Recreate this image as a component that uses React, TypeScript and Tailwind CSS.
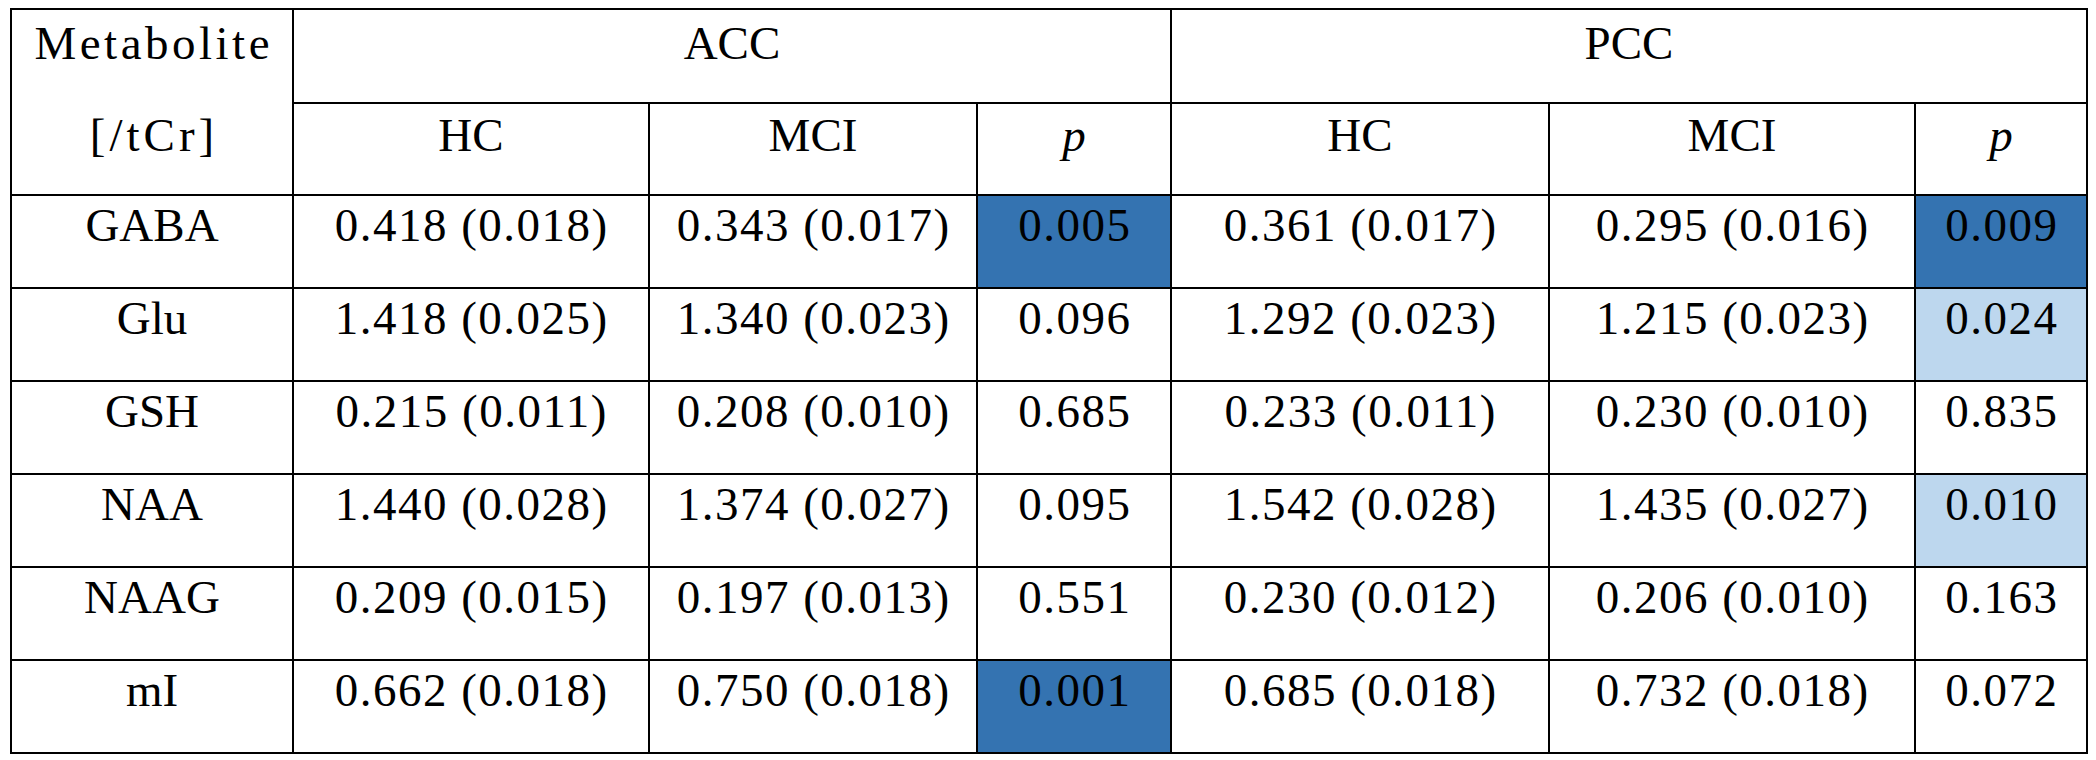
const rows = [
  { name: "GABA", acc: ["0.418 (0.018)", "0.343 (0.017)", "0.005"], pcc: ["0.361 (0.017)", "0.295 (0.016)", "0.009"], accHi: "dark", pccHi: "dark" },
  { name: "Glu", acc: ["1.418 (0.025)", "1.340 (0.023)", "0.096"], pcc: ["1.292 (0.023)", "1.215 (0.023)", "0.024"], accHi: "", pccHi: "light" },
  { name: "GSH", acc: ["0.215 (0.011)", "0.208 (0.010)", "0.685"], pcc: ["0.233 (0.011)", "0.230 (0.010)", "0.835"], accHi: "", pccHi: "" },
  { name: "NAA", acc: ["1.440 (0.028)", "1.374 (0.027)", "0.095"], pcc: ["1.542 (0.028)", "1.435 (0.027)", "0.010"], accHi: "", pccHi: "light" },
  { name: "NAAG", acc: ["0.209 (0.015)", "0.197 (0.013)", "0.551"], pcc: ["0.230 (0.012)", "0.206 (0.010)", "0.163"], accHi: "", pccHi: "" },
  { name: "mI", acc: ["0.662 (0.018)", "0.750 (0.018)", "0.001"], pcc: ["0.685 (0.018)", "0.732 (0.018)", "0.072"], accHi: "dark", pccHi: "" },
];

const cell = "bg-white text-center pt-[3px]";
const num = "bg-white text-center pt-[3px] tracking-[1.5px] pl-[1.5px]";
const head = "bg-white text-center pt-[7px]";

function pBg(hi: string) {
  if (hi === "dark") return "bg-[#3473b1] text-center pt-[3px] tracking-[1.5px] pl-[1.5px]";
  if (hi === "light") return "bg-[#bdd7ee] text-center pt-[3px] tracking-[1.5px] pl-[1.5px]";
  return num;
}

export default function App() {
  return (
    <div className="w-[2096px] h-[760px] bg-white pt-[8px] pl-[10px] font-['Liberation_Serif',serif] text-[47px] leading-[53px] text-black">
      <div className="grid w-max grid-cols-[280px_354px_326px_192px_376px_364px_170px] grid-rows-[92px_90px_repeat(6,91px)] gap-[2px] bg-black p-[2px]">
        <div className="row-span-2 bg-white text-center">
          <div className="h-[94px] pt-[7px] tracking-[3.5px] pl-[3.5px]">Metabolite</div>
          <div className="pt-[5px] tracking-[4px] pl-[4px]">[/tCr]</div>
        </div>
        <div className={`col-span-3 ${head}`}>ACC</div>
        <div className={`col-span-3 ${head}`}>PCC</div>
        <div className={`${cell} pt-[5px]`}>HC</div>
        <div className={`${cell} pt-[5px]`}>MCI</div>
        <div className={`${cell} pt-[5px]`}><i>p</i></div>
        <div className={`${cell} pt-[5px]`}>HC</div>
        <div className={`${cell} pt-[5px]`}>MCI</div>
        <div className={`${cell} pt-[5px]`}><i>p</i></div>
        {rows.map((r) => (
          <div key={r.name} className="contents">
            <div className={cell}>{r.name}</div>
            <div className={num}>{r.acc[0]}</div>
            <div className={num}>{r.acc[1]}</div>
            <div className={pBg(r.accHi)}>{r.acc[2]}</div>
            <div className={num}>{r.pcc[0]}</div>
            <div className={num}>{r.pcc[1]}</div>
            <div className={pBg(r.pccHi)}>{r.pcc[2]}</div>
          </div>
        ))}
      </div>
    </div>
  );
}
